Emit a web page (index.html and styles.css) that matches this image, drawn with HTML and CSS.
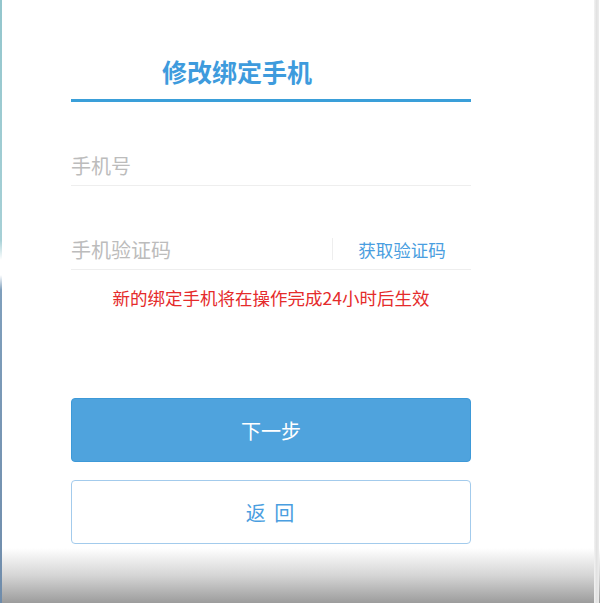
FILE: index.html
```html
<!DOCTYPE html>
<html lang="zh-CN">
<head>
  <meta charset="UTF-8" />
  <meta name="viewport" content="width=device-width, initial-scale=1" />
  <title>修改绑定手机</title>
  <link rel="stylesheet" href="styles.css">
</head>
<body>

  <main class="page">
    <h1 class="title">修改绑定手机</h1>

    <form class="form">
      <div class="field">
        <input type="tel" placeholder="手机号" />
      </div>

      <div class="field">
        <input type="text" placeholder="手机验证码" />
        <span class="divider"></span>
        <a class="get-code" href="#">获取验证码</a>
      </div>

      <p class="notice">新的绑定手机将在操作完成24小时后生效</p>

      <div class="actions">
        <button type="button" class="btn btn-primary">下一步</button>
        <button type="button" class="btn btn-outline">返 回</button>
      </div>
    </form>
  </main>

</body>
</html>
```

FILE: styles.css
```css
:root {
  --blue: #4fa3dd;
  --blue-dark: #3d99d8;
  --blue-text: #4a9ee0;
  --line: #eeeeee;
  --red: #e52b2b;
}

* {
  box-sizing: border-box;
  margin: 0;
  padding: 0;
}

html, body {
  height: 603px;
  overflow: hidden;
}

body {
  font-family: "Noto Sans CJK SC", "Noto Sans", sans-serif;
  background:
    linear-gradient(to bottom, #93c6cd 0, #a6d0d6 240px, #ffffff 260px, #ffffff 275px, #7f9fbc 290px, #6f8cab 100%) left top / 2px 100% no-repeat,
    linear-gradient(to right, #f2f2f2, #e2e2e2, #ececec) 594px top / 5px 100% no-repeat,
    linear-gradient(to bottom, #ffffff 0, #ffffff 548px, #d6d6d6 575px, #9c9c9c 603px);
}

.page {
  width: 400px;
  margin-left: 71px;
  padding-top: 53px;
}

.title {
  font-size: 25px;
  font-weight: 700;
  line-height: 36px;
  color: #3e9bdd;
  text-align: center;
  padding-right: 68px;
  padding-bottom: 10px;
  border-bottom: 3px solid #3a9fd9;
}

.field {
  display: flex;
  align-items: center;
  height: 40px;
  margin-top: 43px;
  border-bottom: 1px solid var(--line);
  box-sizing: content-box;
}

.field input {
  flex: 1;
  min-width: 0;
  border: none;
  outline: none;
  background: transparent;
  font-family: inherit;
  font-size: 20px;
  color: #555;
  height: 40px;
}

.field input::placeholder {
  color: #bcbcbc;
}

.divider {
  width: 1px;
  height: 22px;
  background: var(--line);
}

.get-code {
  width: 138px;
  text-align: center;
  font-size: 17.5px;
  color: var(--blue-text);
  text-decoration: none;
}

.notice {
  margin-top: 13px;
  line-height: 30px;
  font-size: 17.5px;
  color: var(--red);
  text-align: center;
}

.actions {
  display: flex;
  flex-direction: column;
  gap: 18px;
  margin-top: 85px;
}

.btn {
  height: 64px;
  border-radius: 4px;
  font-family: inherit;
  font-size: 20px;
  cursor: pointer;
}

.btn-primary {
  background: var(--blue);
  border: 1px solid var(--blue-dark);
  color: #fff;
}

.btn-outline {
  background: #fff;
  border: 1px solid #a3cbec;
  color: var(--blue-text);
  letter-spacing: 2px;
}
```
